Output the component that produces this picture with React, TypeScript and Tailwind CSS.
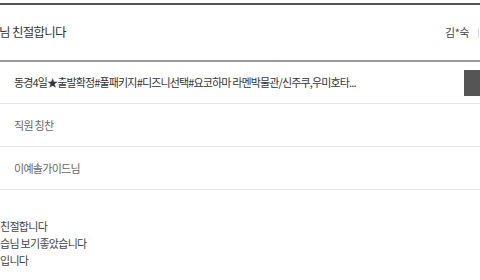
import React from "react";

export default function App() {
  const font = { fontFamily: '"Noto Sans CJK KR", "Noto Sans", sans-serif' };
  return (
    <div className="w-[480px] h-[280px] overflow-hidden bg-white" style={font}>
      <div className="h-[3px]" />
      <div className="flex h-[59px] items-center justify-between border-t-2 border-b-2 border-t-[#555] border-b-[#999]">
        <span className="ml-[-1px] text-[12.5px] tracking-[-0.7px] text-[#333]">님 친절합니다</span>
        <div className="flex items-center">
          <span className="text-[11px] tracking-[-0.5px] text-[#444]">김*숙</span>
          <span className="ml-[9px] mr-[1px] h-[10px] w-px bg-[#ddd]" />
        </div>
      </div>
      <div className="flex h-[42px] items-center justify-between border-b border-[#e5e5e5]">
        <span className="pl-[14px] text-[11px] tracking-[-0.85px] text-[#333]">
          동경4일★출발확정#풀패키지#디즈니선택#요코하마 라멘박물관/신주쿠,우미호타...
        </span>
        <span className="h-[26px] w-[16px] bg-[#555]" />
      </div>
      <div className="flex h-[43px] items-center border-b border-[#e5e5e5]">
        <span className="pl-[14px] text-[11px] tracking-[-0.7px] text-[#666]">직원 칭찬</span>
      </div>
      <div className="flex h-[43px] items-center border-b border-[#e5e5e5]">
        <span className="pl-[14px] text-[11px] tracking-[-0.7px] text-[#666]">이예솔가이드님</span>
      </div>
      <div className="flex flex-col pt-[28px] text-[11px] leading-[17px] tracking-[-0.7px] text-[#444]">
        <span>친절합니다</span>
        <span>습님 보기좋았습니다</span>
        <span>입니다</span>
      </div>
    </div>
  );
}
